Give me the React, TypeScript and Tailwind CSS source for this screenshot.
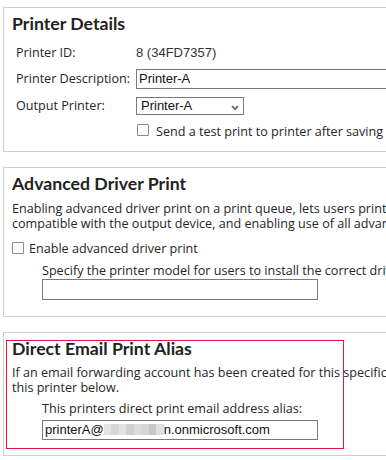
const body = "font-['Open_Sans',sans-serif] text-[12.6px] text-[#262626]"
const heading = "font-['Lato',sans-serif] font-bold text-[17.7px] leading-[22px] text-[#222]"
const field = "border border-[#7a7a7a] bg-white font-['Liberation_Sans',Arial,sans-serif] text-[13px] text-[#111]"

function Checkbox() {
  return <span className="block w-[12px] h-[12px] shrink-0 border border-[#8a8a8a] rounded-[1px] bg-white" />
}

function Blur() {
  const blocks = ['#e4e4e4', '#d8d8d8', '#e2e2e2', '#d0d0d0', '#dcdcdc', '#d6d6d6', '#c9c5cd', '#e0e0e0']
  return (
    <span className="inline-flex align-middle h-[11px] -mt-[2px]">
      {blocks.map((c, i) => (
        <span key={i} className="block w-[7.5px] h-full" style={{ backgroundColor: c }} />
      ))}
    </span>
  )
}

export default function App() {
  return (
    <div className={`w-[386px] h-[460px] overflow-hidden bg-white pt-[7px] pl-[3px] ${body}`}>
      {/* printer details */}
      <section className="w-[520px] border border-[#cfcfcf] pt-[5px] pb-[10px] pl-[8px]">
        <h2 className={heading}>Printer Details</h2>
        <div className="pl-[4px]">
          <div className="mt-[8px] h-[20px] flex items-center leading-[18px]">
            <span className="w-[120px]">Printer ID:</span>
            <span className="font-['Liberation_Sans',Arial,sans-serif] text-[13px] text-[#333]">8 (34FD7357)</span>
          </div>
          <div className="mt-[6px] h-[20px] flex items-center leading-[18px]">
            <span className="w-[120px]">Printer Description:</span>
            <div className={`${field} w-[320px] h-[20px] pl-[2px] leading-[18px]`}>Printer-A</div>
          </div>
          <div className="mt-[8px] h-[18px] flex items-center leading-[18px]">
            <span className="w-[120px]">Output Printer:</span>
            <div className={`${field} w-[108px] h-[18px] pl-[4px] leading-[16px] flex items-center justify-between pr-[4px]`}>
              <span>Printer-A</span>
              <svg width="8" height="6" viewBox="0 0 8 6" className="mt-[3px]">
                <path d="M1 1.2 L4 4.2 L7 1.2" fill="none" stroke="#666" strokeWidth="1.7" />
              </svg>
            </div>
          </div>
          <div className="mt-[8px] flex items-start leading-[18px] pl-[121px]">
            <span className="mt-[1px]"><Checkbox /></span>
            <span className="ml-[7px] whitespace-nowrap">Send a test print to printer after saving changes</span>
          </div>
        </div>
      </section>

      {/* advanced driver print */}
      <section className="mt-[15px] w-[520px] border border-[#cfcfcf] pt-[5px] pb-[16px] pl-[8px]">
        <h2 className={heading}>Advanced Driver Print</h2>
        <p className="mt-[6px] leading-[15px] whitespace-nowrap">
          Enabling advanced driver print on a print queue, lets users print with a driver that is
          <br />
          compatible with the output device, and enabling use of all advanced printer features.
        </p>
        <div className="mt-[9px] flex items-start leading-[18px]">
          <span className="mt-[2px]"><Checkbox /></span>
          <span className="ml-[5px]">Enable advanced driver print</span>
        </div>
        <div className="pl-[30px]">
          <div className="mt-[5px] leading-[16px] whitespace-nowrap">
            Specify the printer model for users to install the correct driver:
          </div>
          <div className={`${field} w-[276px] h-[21px]`} />
        </div>
      </section>

      {/* direct email alias */}
      <section className="relative mt-[15px] w-[520px] border border-[#cfcfcf] pt-[5px] pb-[15px] pl-[8px]">
        <h2 className={heading}>Direct Email Print Alias</h2>
        <p className="mt-[5px] leading-[15px] whitespace-nowrap">
          If an email forwarding account has been created for this specific printer, enter it for
          <br />
          this printer below.
        </p>
        <div className="pl-[30px]">
          <div className="mt-[6px] leading-[16px] whitespace-nowrap">
            This printers direct print email address alias:
          </div>
          <div className={`${field} mt-[3px] w-[276px] h-[20px] pl-[2px] leading-[18px] whitespace-nowrap`}>
            printerA@<Blur />n.onmicrosoft.com
          </div>
        </div>
        <div className="absolute left-[2px] top-[7px] w-[338px] h-[109px] border border-[#e3173e] pointer-events-none" />
      </section>
    </div>
  )
}
